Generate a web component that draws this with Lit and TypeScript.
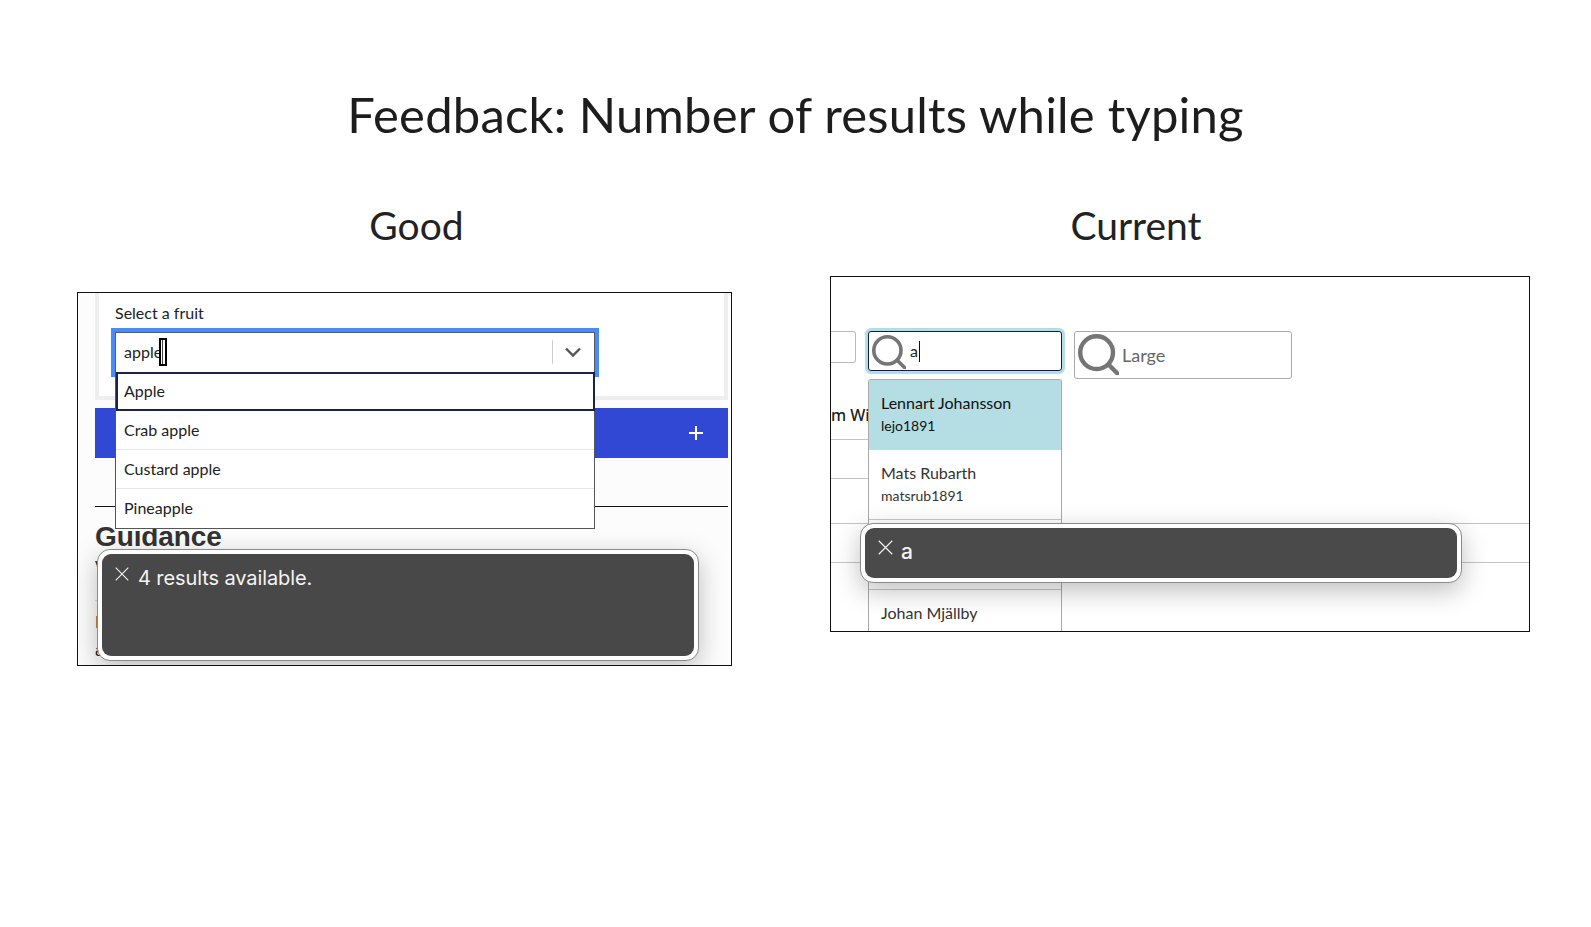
import { LitElement, html, css, svg } from "lit";
import { customElement } from "lit/decorators.js";

const closeIcon = (size: number) => html`<svg class="x" width=${size} height=${size} viewBox="0 0 14 14" fill="none" stroke="#f2f2f2" stroke-width="1.1"><path d="M.7.7l12.6 12.6M13.3.7L.7 13.3"/></svg>`;
const searchIcon = (size: number, sw: number) => {
  const r = size * 0.4;
  const c = r + sw / 2;
  return html`<svg class="mag" width=${size} height=${size} viewBox="0 0 ${size} ${size}" fill="none" stroke="#757575" stroke-width=${sw} stroke-linecap="round">${svg`<circle cx=${c} cy=${c} r=${r}/><path d="M${c + r * 0.72} ${c + r * 0.72}L${size - 1.5} ${size - 1.5}"/>`}</svg>`;
};

@customElement("app-root")
export class AppRoot extends LitElement {
  static styles = css`
    :host { display: block; width: 1591px; height: 927px; background: #fff; overflow: hidden; color: #1a1a1a; font-family: Lato, "Noto Sans", sans-serif; }
    * { box-sizing: border-box; }
    h1 { margin: 0; padding-top: 82px; height: 205px; text-align: center; font-size: 49px; line-height: 64px; font-weight: 400; letter-spacing: .2px; color: #1d1d1d; }
    .columns { display: grid; grid-template-columns: 655px 700px; column-gap: 98px; padding-left: 77px; }
    h2 { margin: 0; height: 50px; line-height: 41px; font-size: 39px; font-weight: 400; text-align: center; color: #222; }
    .good h2 { padding-left: 24px; }
    .current h2 { padding-right: 88px; }
    .frame { position: relative; overflow: hidden; border: 1px solid #111; background: #fff; }
    .good .frame { height: 374px; margin-top: 37px; padding: 0 3px 0 17px; background: #fcfcfc; }
    .current .frame { height: 356px; margin-top: 21px; padding-top: 54px; }

    .panel { height: 107px; background: #fff; border: 4px solid #eee; border-top: 0; padding: 10px 0 0 16px; }
    .label { font-size: 16px; line-height: 20px; height: 29px; color: #222; }
    .combo { position: relative; width: 480px; }
    .input { display: flex; align-items: center; height: 41px; border: 1px solid #5a5a5a; background: #fff; box-shadow: 0 0 0 4px #4a8cf7; padding: 0 0 2px 8px; font-size: 16px; }
    .typed { color: #222; }
    .caret { width: 8px; height: 28px; margin-left: -3px; background: #fff; border: 2px solid #000; position: relative; }
    .caret::after { content: ""; position: absolute; left: 1px; top: 0; bottom: 0; width: 2px; background: #fff; border-left: 1px solid #444; }
    .sep { margin-left: auto; width: 1px; height: 24px; background: #ccc; }
    .chev { margin: 0 13px 0 12px; }
    .options { position: absolute; left: 0; top: 40px; width: 100%; background: #fff; border: 1px solid #555; border-top: 0; }
    .opt { height: 39px; padding-left: 8px; line-height: 38px; font-size: 16px; color: #222; border-bottom: 1px solid #e6e6e6; }
    .opt.active { border: 2px solid #1a2447; padding-left: 6px; line-height: 34px; margin: 0 -1px 0 0; }
    .opt:last-child { border-bottom: 0; }

    .band { display: flex; align-items: center; justify-content: flex-end; height: 50px; margin-top: 8px; padding-right: 25px; background: #3148d4; }
    .rule { height: 1px; margin-top: 48px; background: #111; }
    .guidance { margin: 13px 0 0; font: 700 28px/34px "Liberation Sans", sans-serif; letter-spacing: -.1px; color: #333; }
    .under { font: 16px/20px "Liberation Sans", sans-serif; color: #222; }
    .under p { margin: 0; white-space: nowrap; }
    .under .p1 { margin-top: 4px; }
    .under .hair { height: 1px; width: 30px; background: #ddd; margin-top: 22px; }
    .under .p2 { margin-top: 12px; }
    .under .p3 { margin-top: 8px; }

    .toast { position: absolute; background: #fff; border: 1px solid #8a8a8a; border-radius: 13px; padding: 4px; box-shadow: 0 8px 26px rgba(0,0,0,.25); }
    .toast-in { display: flex; align-items: flex-start; height: 100%; background: #4a4a4a; border-radius: 9px; color: #f4f4f4; font-family: Inter, sans-serif; }
    .toast.t1 { left: 19px; top: 256px; width: 602px; height: 112px; }
    .t1 .toast-in { gap: 9px; padding: 11px 0 0 13px; font-size: 20px; line-height: 26px; letter-spacing: -.1px; background: #484848; }
    .t1 .x { margin-top: 2px; }
    .toast.t2 { left: 29px; top: 246px; width: 602px; height: 60px; }
    .t2 .toast-in { gap: 8px; padding: 11px 0 0 13px; font-size: 21px; line-height: 26px; font-weight: 500; }
    .t2 .x { margin-top: 1px; }

    .searches { display: flex; align-items: flex-start; }
    .stub-box { width: 25px; height: 32px; border: 1px solid #bbb; border-left: 0; border-radius: 0 3px 3px 0; margin-right: 12px; }
    .search { display: flex; align-items: center; border-radius: 3px; background: #fff; color: #555; }
    .search.focus { width: 194px; height: 40px; margin-right: 12px; border: 1px solid #0b2050; box-shadow: 0 0 0 3px #b5dde4; padding: 1px 0 0 3px; gap: 4px; font-size: 16px; color: #222; }
    .text-caret { display: inline-block; width: 1px; height: 21px; background: #111; margin-left: 1px; vertical-align: -5px; }
    .search.large { width: 218px; height: 48px; border: 1px solid #aaa; padding: 0 0 1px 3px; gap: 3px; font-size: 18px; color: #666; }
    .t-rows { font: 500 16px/20px "Noto Sans", sans-serif; color: #222; }
    .t-row { border-bottom: 1px solid #c4c4c4; width: 37px; white-space: nowrap; overflow: hidden; }
    .t-row.head { height: 61px; padding-top: 26px; }
    .t-row.r2 { height: 39px; }
    .t-row.r3 { height: 45px; width: 100%; }
    .t-row.r4 { height: 39px; width: 100%; }
    .people { position: absolute; left: 37px; top: 102px; width: 194px; background: #fff; border: 1px solid #aaa; border-bottom: 0; border-radius: 3px 3px 0 0; }
    .person { height: 70px; padding: 12px 12px 0; border-bottom: 1px solid #c8c8c8; color: #333; }
    .person.hi { height: 70px; background: #b5dde4; color: #111; border-bottom: 0; }
    .name { font-size: 16px; line-height: 22px; }
    .id { font-size: 14px; line-height: 22px; margin-top: 1px; }
  `;

  render() {
    return html`
      <h1>Feedback: Number of results while typing</h1>
      <div class="columns">
        <section class="good">
          <h2>Good</h2>
          <div class="frame">
            <div class="panel">
              <div class="label">Select a fruit</div>
              <div class="combo">
                <div class="input">
                  <span class="typed">apple</span><span class="caret"></span>
                  <span class="sep"></span>
                  <svg class="chev" width="16" height="10" viewBox="0 0 16 10" fill="none" stroke="#555" stroke-width="2.4"><path d="M1 1.5l7 7 7-7"/></svg>
                </div>
                <div class="options">
                  <div class="opt active">Apple</div>
                  <div class="opt">Crab apple</div>
                  <div class="opt">Custard apple</div>
                  <div class="opt">Pineapple</div>
                </div>
              </div>
            </div>
            <div class="band">
              <svg width="14" height="14" viewBox="0 0 14 14" stroke="#fff" stroke-width="2"><path d="M7 0v14M0 7h14"/></svg>
            </div>
            <div class="rule"></div>
            <h3 class="guidance">Guidance</h3>
            <div class="under">
              <p class="p1">V</p>
              <div class="hair"></div>
              <p class="p2">I</p>
              <p class="p3">a</p>
            </div>
            <div class="toast t1"><div class="toast-in">${closeIcon(14)}<span>4 results available.</span></div></div>
          </div>
        </section>
        <section class="current">
          <h2>Current</h2>
          <div class="frame">
            <div class="searches">
              <div class="stub-box"></div>
              <div class="search focus">${searchIcon(34, 3.6)}<span>a<span class="text-caret"></span></span></div>
              <div class="search large">${searchIcon(41, 4.4)}<span>Large</span></div>
            </div>
            <div class="t-rows">
              <div class="t-row head">m Wi</div>
              <div class="t-row r2"></div>
              <div class="t-row r3"></div>
              <div class="t-row r4"></div>
            </div>
            <div class="people">
              <div class="person hi"><div class="name">Lennart Johansson</div><div class="id">lejo1891</div></div>
              <div class="person"><div class="name">Mats Rubarth</div><div class="id">matsrub1891</div></div>
              <div class="person"></div>
              <div class="person"><div class="name">Johan Mjällby</div></div>
            </div>
            <div class="toast t2"><div class="toast-in">${closeIcon(15)}<span>a</span></div></div>
          </div>
        </section>
      </div>
    `;
  }
}
